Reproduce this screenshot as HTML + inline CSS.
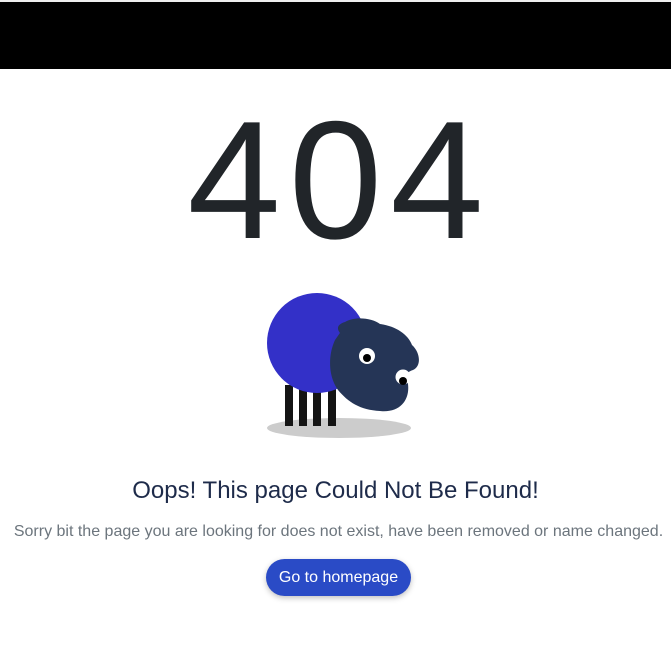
<!DOCTYPE html>
<html><head><style>
html,body{margin:0;padding:0;background:#fff;width:671px;height:671px;overflow:hidden;font-family:"Liberation Sans",Arial,sans-serif}
.bar{position:absolute;left:0;top:2px;width:671px;height:67px;background:#000}
.top{position:absolute;left:0;top:0;width:671px;height:2px;background:#eee}
.n{position:absolute;left:4px;width:671px;top:96px;text-align:center;font-size:168px;line-height:168px;color:#212529;letter-spacing:8px}
h1{position:absolute;left:0;width:671px;top:477px;margin:0;text-align:center;font-size:24px;font-weight:normal;color:#1e2b4a;line-height:28px}
p{position:absolute;left:3px;width:671px;top:522px;margin:0;text-align:center;font-size:16px;color:#6c757d;line-height:20px}
.btn{position:absolute;left:266px;top:559px;width:145px;height:37px;border-radius:19px;background:#2a4bc6;color:#fff;font-size:16px;line-height:37px;text-align:center;box-shadow:0 2px 6px rgba(0,0,0,.25)}
svg{position:absolute;left:0;top:0}
</style></head><body>
<div class="top"></div><div class="bar"></div>
<div class="n">404</div>
<svg width="671" height="671">
<ellipse cx="339" cy="428" rx="72" ry="10" fill="#cccccc"/>
<rect x="285" y="385" width="8" height="41" fill="#141414"/>
<rect x="299" y="385" width="8" height="41" fill="#141414"/>
<rect x="313" y="385" width="8" height="41" fill="#141414"/>
<rect x="328" y="385" width="8" height="41" fill="#141414"/>
<circle cx="317" cy="343" r="50" fill="#3330c8"/>
<path d="M345 322 C355 316 372 318 380 324 C395 326 408 334 412 345 C420 352 422 366 413 370 C407 372 405 374 408 384 C410 400 400 413 380 411 C360 410 348 402 338 390 C328 376 328 355 335 340 C338 336 339 334 340 333 C336 328 338 324 345 322 Z" fill="#253556"/>
<circle cx="367" cy="356" r="8" fill="#fff"/>
<circle cx="367" cy="358" r="4" fill="#000"/>
<circle cx="403" cy="377" r="7.5" fill="#fff"/>
<circle cx="403" cy="381" r="4" fill="#000"/>
</svg>
<h1>Oops! This page Could Not Be Found!</h1>
<p>Sorry bit the page you are looking for does not exist, have been removed or name changed.</p>
<div class="btn">Go to homepage</div>
</body></html>
